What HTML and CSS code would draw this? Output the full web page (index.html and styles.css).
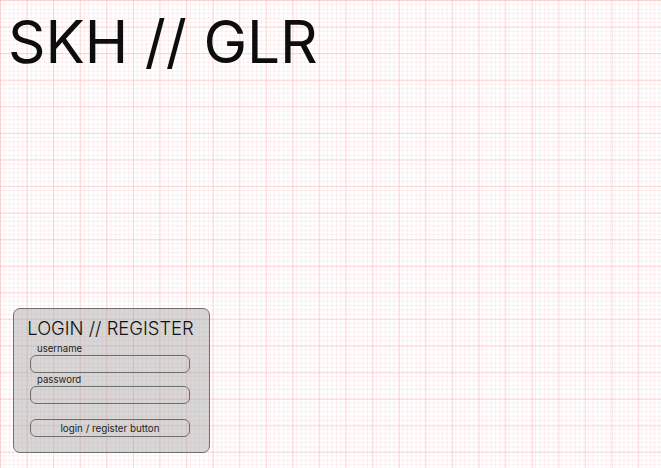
FILE: index.html
```html
<!DOCTYPE html>
<html lang="en">
<head>
<meta charset="utf-8">
<title>SKH // GLR</title>
<link rel="stylesheet" href="styles.css">
</head>
<body>
<main class="page">
  <h1 class="brand">SKH // GLR</h1>
  <form class="auth-card">
    <h2 class="auth-title">LOGIN // REGISTER</h2>
    <label class="field-label" for="username">username</label>
    <input class="field-input" id="username" type="text">
    <label class="field-label field-label-second" for="password">password</label>
    <input class="field-input" id="password" type="password">
    <button class="auth-button" type="button">login / register button</button>
  </form>
</main>
</body>
</html>
```

FILE: styles.css
```css
html, body {
  margin: 0;
  padding: 0;
  height: 100%;
}

body {
  font-family: Inter, "Noto Sans", "Liberation Sans", sans-serif;
  color: #111;
  background-color: #ffffff;
  background-image:
    linear-gradient(to right, rgba(245, 150, 150, 0.32) 1px, transparent 1px),
    linear-gradient(to bottom, rgba(245, 150, 150, 0.32) 1px, transparent 1px),
    linear-gradient(to right, rgba(248, 170, 170, 0.18) 1px, transparent 1px),
    linear-gradient(to bottom, rgba(248, 170, 170, 0.18) 1px, transparent 1px);
  background-size: 26.6px 26.6px, 26.6px 26.6px, 4.43px 4.43px, 4.43px 4.43px;
}

.page {
  display: flex;
  flex-direction: column;
  align-items: flex-start;
  min-height: 100vh;
  box-sizing: border-box;
  padding: 0 0 15px 13px;
}

.brand {
  margin: 13px 0 0 -5px;
  font-size: 58.5px;
  line-height: 1;
  font-weight: 400;
  letter-spacing: 0;
  color: #0d0d0d;
}

.auth-card {
  margin-top: auto;
  width: 197px;
  height: 145px;
  box-sizing: border-box;
  border: 1px solid #707070;
  border-radius: 7px;
  background: rgba(150, 150, 150, 0.38);
  display: flex;
  flex-direction: column;
  align-items: center;
  padding: 10px 0 0 0;
}

.auth-title {
  margin: 0 0 0 -2px;
  font-size: 18.4px;
  line-height: 1;
  font-weight: 300;
  color: #111;
  white-space: nowrap;
}

.field-label {
  align-self: flex-start;
  margin: 6px 0 0 23px;
  font-size: 9.6px;
  line-height: 11px;
  color: #222;
}

.field-label-second {
  margin-top: 1px;
}

.field-input {
  width: 160px;
  height: 18px;
  box-sizing: border-box;
  margin: 1px 0 0 -3px;
  padding: 0 6px;
  border: 1px solid #6f6f6f;
  border-radius: 6px;
  background: transparent;
  font-family: inherit;
  font-size: 9px;
  outline: none;
}

.auth-button {
  width: 160px;
  height: 18px;
  box-sizing: border-box;
  margin: 15px 0 0 -3px;
  padding: 1px 0 0;
  border: 1px solid #6f6f6f;
  border-radius: 6px;
  background: transparent;
  font-family: inherit;
  font-size: 9.8px;
  line-height: 15px;
  color: #222;
}
```
